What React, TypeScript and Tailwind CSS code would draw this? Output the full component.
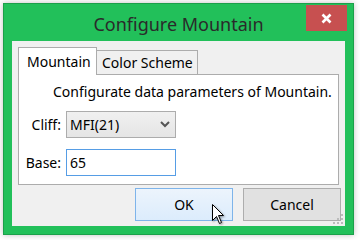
import React from "react";

export default function App() {
  const font = { fontFamily: '"Noto Sans", "Open Sans", sans-serif' };
  return (
    <div className="w-[360px] h-[240px] bg-white relative overflow-hidden" style={font}>
      <div className="absolute left-[3px] top-[3px] w-[351px] h-[232px] bg-[#22c05a] border border-[#1ba04a] flex flex-col shadow-[0_0_6px_rgba(0,0,0,0.25)]">
        {/* title bar */}
        <div className="h-[37px] relative flex items-center justify-center">
          <span className="text-[18px] text-[#2a2a2a] leading-none mt-[2px] whitespace-nowrap">Configure Mountain</span>
          <div className="absolute top-[1px] right-[6px] w-[41px] h-[26px] bg-[#c75050] flex items-center justify-center">
            <svg width="11" height="11" viewBox="0 0 11 11">
              <path d="M1.5 1.5 L9.5 9.5 M9.5 1.5 L1.5 9.5" stroke="white" strokeWidth="2.6" />
            </svg>
          </div>
        </div>
        {/* content */}
        <div className="flex-1 mx-[8px] mb-[8px] bg-[#f0f0f0] flex flex-col pt-[6px]">
          {/* tabs */}
          <div className="flex items-end pl-[6px] h-[27px] relative z-10">
            <div className="w-[79px] h-[28px] bg-white border border-[#acacac] border-b-0 flex items-center pl-[8px] text-[14px] text-black -mb-[1px] whitespace-nowrap">
              Mountain
            </div>
            <div className="w-[101px] h-[24px] bg-[#f0f0f0] border border-[#acacac] border-b-0 border-l-0 flex items-center pl-[5px] text-[14px] text-black whitespace-nowrap">
              Color Scheme
            </div>
          </div>
          <div className="ml-[6px] w-[321px] h-[111px] bg-white border border-[#acacac] flex flex-col">
            <div className="pl-[34px] pt-[7px] text-[14px] text-black leading-[20px] whitespace-nowrap">
              Configurate data parameters of Mountain.
            </div>
            <div className="grid grid-cols-[42px_110px] gap-x-[5px] gap-y-[11px] mt-[9px] items-center text-[14px] text-black">
              <div className="text-right">Cliff:</div>
              <div className="h-[27px] border border-[#acacac] bg-gradient-to-b from-[#f0f0f0] to-[#e5e5e5] flex items-center justify-between pl-[3px] pr-[5px]">
                <span>MFI(21)</span>
                <svg width="10" height="7" viewBox="0 0 10 7">
                  <path d="M1 1 L5 5 L9 1" stroke="#555" strokeWidth="2" fill="none" />
                </svg>
              </div>
              <div className="text-right">Base:</div>
              <div className="h-[27px] border border-[#569de5] bg-white flex items-center pl-[3px]">
                <span>65</span>
              </div>
            </div>
          </div>
          <div className="flex justify-end gap-[10px] pr-[4px] mt-[3px]">
            <div className="w-[98px] h-[33px] border border-[#7eb4ea] bg-gradient-to-b from-[#ecf4fc] to-[#dcecfc] flex items-center justify-center text-[14px] text-black">
              OK
            </div>
            <div className="w-[98px] h-[33px] border border-[#adadad] bg-[#e1e1e1] flex items-center justify-center text-[14px] text-black">
              Cancel
            </div>
          </div>
        </div>
      </div>
      {/* resize grip */}
      <svg className="absolute left-[331px] top-[213px]" width="13" height="13" viewBox="0 0 13 13">
        <rect x="10" y="1" width="2" height="2" fill="#bcbcbc" />
        <rect x="10" y="5" width="2" height="2" fill="#bcbcbc" />
        <rect x="6" y="5" width="2" height="2" fill="#bcbcbc" />
        <rect x="10" y="9" width="2" height="2" fill="#bcbcbc" />
        <rect x="6" y="9" width="2" height="2" fill="#bcbcbc" />
        <rect x="2" y="9" width="2" height="2" fill="#bcbcbc" />
      </svg>
      {/* cursor */}
      <svg className="absolute left-[212px] top-[204px]" width="14" height="22" viewBox="0 0 14 22" style={{ filter: "drop-shadow(1px 1px 1px rgba(0,0,0,0.4))" }}>
        <path d="M0.5 0.5 L0.5 16.5 L4.5 12.5 L7.5 19.5 L9.5 18.5 L6.5 11.5 L11.5 11.5 Z" fill="white" stroke="black" strokeWidth="1" strokeLinejoin="miter" />
      </svg>
    </div>
  );
}
